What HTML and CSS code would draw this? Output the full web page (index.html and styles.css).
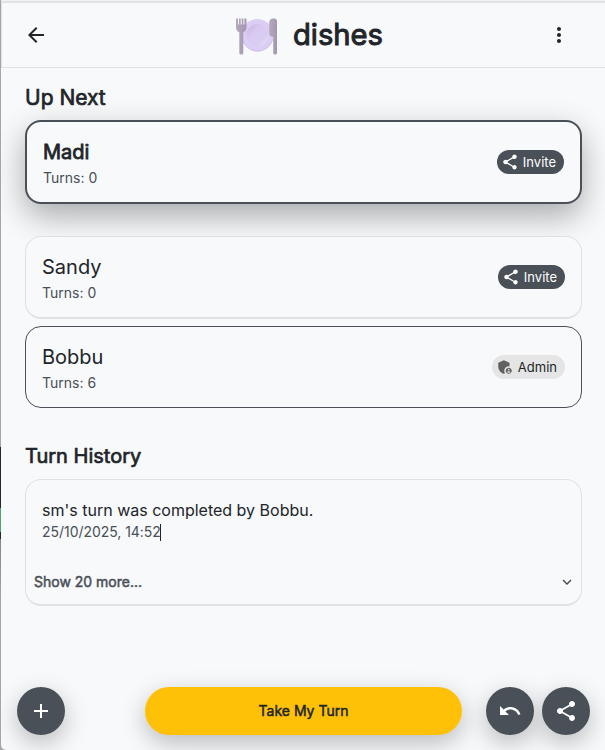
FILE: index.html
```html
<!DOCTYPE html>
<html lang="en">
<head>
<meta charset="utf-8">
<title>dishes</title>
<link rel="stylesheet" href="styles.css">
</head>
<body>
<svg class="defs" width="0" height="0">
  <symbol id="share" viewBox="0 0 24 24"><path d="M18 16.08c-.76 0-1.44.3-1.96.77L8.91 12.7c.05-.23.09-.46.09-.7s-.04-.47-.09-.7l7.05-4.11c.54.5 1.25.81 2.04.81 1.66 0 3-1.34 3-3s-1.34-3-3-3-3 1.34-3 3c0 .24.04.47.09.7L8.04 9.81C7.5 9.31 6.79 9 6 9c-1.66 0-3 1.34-3 3s1.34 3 3 3c.79 0 1.5-.31 2.04-.81l7.12 4.16c-.05.21-.08.43-.08.65 0 1.61 1.31 2.92 2.92 2.92s2.92-1.31 2.92-2.92-1.31-2.92-2.92-2.92z"/></symbol>
</svg>
<div class="edge"></div>
<div class="app">
  <header class="header">
    <svg class="icon" viewBox="0 0 24 24"><path d="M20 11H7.83l5.59-5.59L12 4l-8 8 8 8 1.41-1.41L7.83 13H20v-2z"/></svg>
    <div class="brand">
      <svg class="logo" viewBox="0 0 42 38">
        <defs>
          <linearGradient id="well" x1="0" y1="0" x2="1" y2="1"><stop offset="0" stop-color="#c5b1e0"/><stop offset=".35" stop-color="#d8c9f0"/><stop offset=".7" stop-color="#d9ccf1"/><stop offset="1" stop-color="#eee7fb"/></linearGradient>
          <linearGradient id="steel"><stop offset="0" stop-color="#b5a9bd"/><stop offset="1" stop-color="#a397b0"/></linearGradient>
        </defs>
        <circle cx="21.5" cy="17.5" r="16" fill="#c9b3e6"/>
        <circle cx="21.5" cy="17" r="15.8" fill="#dccdf5"/>
        <circle cx="21.5" cy="17" r="11" fill="url(#well)"/>
        <path fill="url(#steel)" d="M0 1.2Q0 .5.8.5H2v6h1V.5h1.700v6h1V.5h1.700v6h1V.5h1.400q.7 0 .7.7v8.300q0 3.200-3.200 5.100V35q0 1.500-2 1.500T3.300 35V14.600Q0 12.700 0 9.500z"/>
        <path fill="url(#steel)" d="M33.200 4.500q0-4 4.300-4h.5q3 0 3 3V35q0 1.500-1.900 1.500T37.200 35V19q-4-1-4-3.500z"/>
      </svg>
      <h1>dishes</h1>
    </div>
    <svg class="icon" viewBox="0 0 24 24"><path d="M12 8c1.100 0 2-.9 2-2s-.9-2-2-2-2 .9-2 2 .9 2 2 2zm0 2c-1.100 0-2 .9-2 2s.9 2 2 2 2-.9 2-2-.9-2-2-2zm0 6c-1.100 0-2 .9-2 2s.9 2 2 2 2-.9 2-2-.9-2-2-2z"/></svg>
  </header>
  <main class="content">
    <h2>Up Next</h2>
    <section class="card next">
      <div><div class="name">Madi</div><div class="turns">Turns: 0</div></div>
      <span class="chip invite"><svg viewBox="0 0 24 24"><use href="#share"/></svg>Invite</span>
    </section>
    <section class="card">
      <div><div class="name">Sandy</div><div class="turns">Turns: 0</div></div>
      <span class="chip invite"><svg viewBox="0 0 24 24"><use href="#share"/></svg>Invite</span>
    </section>
    <section class="card me">
      <div><div class="name">Bobbu</div><div class="turns">Turns: 6</div></div>
      <span class="chip admin"><svg viewBox="0 0 24 24"><path d="M17 11c.34 0 .67.04 1 .09V6.270L10.500 3 3 6.270v4.910c0 4.540 3.200 8.790 7.500 9.820.55-.13 1.080-.32 1.600-.55-.69-.98-1.100-2.170-1.100-3.450 0-3.310 2.690-6 6-6z"/><path d="M17 13c-2.210 0-4 1.790-4 4s1.790 4 4 4 4-1.790 4-4-1.790-4-4-4zm0 1.380c.62 0 1.120.51 1.120 1.120s-.51 1.120-1.120 1.120-1.120-.51-1.120-1.120.5-1.120 1.120-1.120zm0 5.370c-.93 0-1.740-.46-2.240-1.170.05-.72 1.510-1.080 2.240-1.080s2.190.36 2.240 1.080c-.5.71-1.310 1.170-2.240 1.170z"/></svg>Admin</span>
    </section>
    <h2 class="history-title">Turn History</h2>
    <section class="history">
      <div class="event">sm's turn was completed by Bobbu.</div>
      <div class="date">25/10/2025, 14:52<span class="caret"></span></div>
      <div class="more"><span>Show 20 more...</span><svg viewBox="0 0 24 24"><path d="M7.410 8.590 12 13.170l4.590-4.580L18 10l-6 6-6-6z"/></svg></div>
    </section>
  </main>
  <footer class="actions">
    <button class="fab add"><svg viewBox="0 0 24 24"><path d="M19 13h-6v6h-2v-6H5v-2h6V5h2v6h6v2z"/></svg></button>
    <button class="take">Take My Turn</button>
    <button class="fab undo"><svg viewBox="0 0 24 24"><path d="M12.500 8c-2.650 0-5.050.99-6.900 2.600L2 7v9h9l-3.620-3.620c1.390-1.160 3.160-1.880 5.120-1.880 3.540 0 6.550 2.310 7.600 5.500l2.370-.78C21.080 11.030 17.150 8 12.500 8z"/></svg></button>
    <button class="fab"><svg viewBox="0 0 24 24"><use href="#share"/></svg></button>
  </footer>
</div>
</body>
</html>
```
FILE: styles.css
```css
* { box-sizing: border-box; }
body {
  margin: 0;
  width: 605px;
  height: 750px;
  display: flex;
  overflow: hidden;
  background: #a6a6a8;
  color: #212529;
  font-family: Inter, sans-serif;
}
.defs { position: absolute; }
svg { display: block; fill: currentColor; }
h1, h2 { margin: 0; font-weight: 400; }
.edge {
  width: 1px;
  flex: none;
  background: linear-gradient(#a6a6a8 447px, #28252a 447px 508px, #4aa76e 508px 532px, #28252a 532px 539px, #858585 539px, #a6a6a8 600px);
}
.app {
  flex: 1;
  display: flex;
  flex-direction: column;
  overflow: hidden;
  background: #f8f9fb;
  border-top: 1px solid #f1f2f4;
  border-bottom-left-radius: 5px;
}
.header {
  height: 67px;
  flex: none;
  display: flex;
  align-items: center;
  padding: 0 34px 0 22px;
  border: 1px solid #dee2e6;
  border-top-width: 2px;
  border-right: 0;
  border-top-color: #dfe2e6;
}
.icon { width: 24px; height: 24px; }
.brand { display: flex; flex: 1; align-items: center; gap: 15px; padding-left: 188px; }
.logo { width: 42px; height: 38px; margin-top: 4px; }
h1 { font-size: 29.2px; line-height: 40px; margin-top: -1px; -webkit-text-stroke: 1px; }
.content { padding: 16px 23px 0 24px; }
h2 { font-size: 21px; line-height: 28px; -webkit-text-stroke: .7px; }
.card {
  height: 83px;
  display: flex;
  align-items: center;
  justify-content: space-between;
  margin-bottom: 7px;
  padding: 0 16px;
  border: 1px solid #dee2e6;
  border-bottom-width: 2px;
  border-radius: 16px;
  background: #f8f9fb;
}
.card.next {
  height: 84px;
  margin: 8px 0 32px;
  border: 2px solid #495057;
  box-shadow: 0 12px 32px rgba(0, 0, 0, .32);
}
.card.me { height: 82px; border: 1px solid #495057; }
.name { font-size: 20px; line-height: 28px; margin-top: 2px; }
.next .name { -webkit-text-stroke: .8px; }
.turns { font-size: 14px; line-height: 20px; margin-top: 2px; color: #495057; }
.chip {
  height: 24px;
  display: flex;
  align-items: center;
  gap: 4px;
  padding: 0 8px 0 4px;
  border-radius: 12px;
  font-size: 13px;
}
.chip svg { width: 18px; height: 18px; }
.invite { background: #495057; color: #fff; }
.admin { background: #e5e5e5; }
.admin svg { fill: #616161; }
.history-title { margin-top: 34px; font-size: 20px; }
.history {
  height: 127px;
  margin-top: 9px;
  padding: 18px 6px 0 16px;
  border: 1px solid #dee2e6;
  border-bottom-width: 2px;
  border-radius: 16px;
}
.event { font-size: 16px; line-height: 24px; }
.date { display: flex; align-items: center; font-size: 14px; line-height: 20px; letter-spacing: -.04px; color: #495057; }
.caret { width: 1px; height: 17px; margin-left: -1px; background: #212529; }
.more {
  display: flex;
  align-items: center;
  justify-content: space-between;
  margin: 30px 0 0 -8px;
  color: #495057;
  font-size: 14px;
  line-height: 20px;
  -webkit-text-stroke: .5px;
}
.more svg { width: 18px; height: 18px; margin-right: -1px; stroke: none; }
.actions { display: flex; margin-top: 81px; padding: 0 15px 0 16px; }
button { border: 0; padding: 0; font: inherit; box-shadow: 0 8px 24px rgba(0, 0, 0, .25); }
.fab {
  width: 48px;
  height: 48px;
  display: grid;
  place-items: center;
  border-radius: 50%;
  background: #495057;
  color: #fff;
}
.fab svg { width: 24px; height: 24px; }
.add { margin-right: 80px; }
.take {
  flex: 1;
  height: 48px;
  padding-bottom: 1px;
  border-radius: 24px;
  background: #ffc107;
  color: #212529;
  font-size: 14px;
  -webkit-text-stroke: .5px;
}
.undo { margin: 0 8px 0 24px; }
```
